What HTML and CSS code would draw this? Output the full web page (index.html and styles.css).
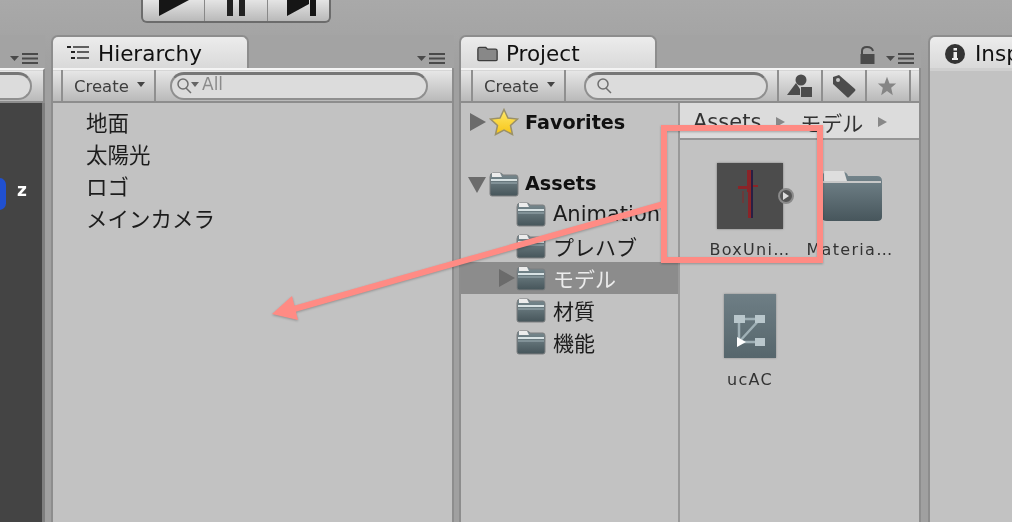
FILE: index.html
```html
<!DOCTYPE html>
<html lang="ja">
<head>
<meta charset="utf-8">
<title>Unity Editor</title>
<link rel="stylesheet" href="styles.css">
</head>
<body>
<svg class="defs" width="0" height="0" aria-hidden="true">
  <defs>
    <linearGradient id="fbody" x1="0" y1="0" x2="0" y2="1"><stop offset="0" stop-color="#7b8c92"/><stop offset="1" stop-color="#46555a"/></linearGradient>
    <linearGradient id="ctrl" x1="0" y1="0" x2="0" y2="1"><stop offset="0" stop-color="#76878e"/><stop offset="1" stop-color="#47565c"/></linearGradient>
    <linearGradient id="star" x1="0" y1="0" x2="0" y2="1"><stop offset="0" stop-color="#ffe96a"/><stop offset="1" stop-color="#f6c416"/></linearGradient>
    <symbol id="folder" viewBox="0 0 30 26">
      <path d="M1 6 Q1 2 4 2 H11 Q13 2 14 4 H27 Q29 4 29 7 V23 Q29 25 27 25 H3 Q1 25 1 23 Z" fill="url(#fbody)" stroke="#7c7f80" stroke-width="1"/>
      <path d="M3 2 H11 L13 6 H3 Z" fill="#ececec"/>
      <path d="M2 9 H28" stroke="#d8e2e4" stroke-width="2"/>
      <path d="M2 12 H28" stroke="#9fb0b5" stroke-width="1"/>
    </symbol>
    <symbol id="menu" viewBox="0 0 29 11">
      <path d="M0 3 H9 L4.500 8 Z" fill="#4a4a4a"/>
      <path d="M12 1 H28 M12 5.500 H28 M12 10 H28" stroke="#4a4a4a" stroke-width="2"/>
    </symbol>
  </defs>
</svg>
<div class="app">
  <header class="topbar">
    <div class="playback">
      <div class="pb-btn"><svg width="32" height="17" viewBox="0 0 32 17"><path d="M1 0 H31 L1 16 Z" fill="#161616"/></svg></div>
      <div class="pb-btn"><svg width="20" height="17" viewBox="0 0 20 17"><path d="M1 0 H7 V16 H1 Z M13 0 H19 V16 H13 Z" fill="#222"/></svg></div>
      <div class="pb-btn"><svg class="step" width="32" height="17" viewBox="0 0 32 17"><path d="M1 0 H23 V4 L1 16 Z M24 0 H30 V16 H24 Z" fill="#161616"/></svg></div>
    </div>
  </header>

  <main class="panels">
    <section class="panel scene">
      <div class="panel-head"><svg class="menu-icon"><use href="#menu"/></svg></div>
      <div class="toolbar scene-toolbar"><div class="search scene-search"></div></div>
      <div class="scene-view"><div class="scene-blob"></div><span class="axis">z</span></div>
    </section>

    <section class="panel hierarchy">
      <div class="panel-head">
        <div class="tab hier-tab">
          <svg class="tab-icon" width="24" height="17" viewBox="0 0 24 17"><path d="M0 1 H4 V3 H0 Z M4 6 H8 V8 H4 Z M4 12 H8 V14 H4 Z" fill="#222"/><path d="M6 2 H22 M10 7 H22 M10 13 H22" stroke="#333" stroke-width="1.600"/></svg>
          <span>Hierarchy</span>
        </div>
        <svg class="menu-icon"><use href="#menu"/></svg>
      </div>
      <div class="toolbar">
        <div class="tb-spacer"></div>
        <div class="create">Create <i class="caret"></i></div>
        <div class="search hier-search">
          <svg width="27" height="20" viewBox="0 0 27 20"><circle cx="8" cy="8" r="5" fill="none" stroke="#6f6f6f" stroke-width="1.500"/><path d="M11 12 L16 17" stroke="#6f6f6f" stroke-width="1.500"/><path d="M16 6 H24 L20 11 Z" fill="#666"/></svg>
          <span>All</span>
        </div>
      </div>
      <ul class="hier-list">
        <li>地面</li>
        <li>太陽光</li>
        <li>ロゴ</li>
        <li>メインカメラ</li>
      </ul>
    </section>

    <section class="panel project">
      <div class="panel-head">
        <div class="tab proj-tab">
          <svg class="tab-icon" width="21" height="16" viewBox="0 0 24 17"><path d="M1 3 Q1 1 3 1 H10 L12 3 H21 Q23 3 23 5 V15 Q23 16 21 16 H3 Q1 16 1 15 Z" fill="#888" stroke="#3c3c3c" stroke-width="1.500"/></svg>
          <span>Project</span>
        </div>
        <svg class="lock" width="15" height="18" viewBox="0 0 15 18"><path d="M2 9 V5 Q2 1 7 1 Q12 1 13 5" fill="none" stroke="#4a4a4a" stroke-width="2"/><rect x="0.500" y="8" width="14" height="10" fill="#4a4a4a"/></svg>
        <svg class="menu-icon proj-menu"><use href="#menu"/></svg>
      </div>
      <div class="toolbar">
        <div class="tb-spacer proj-spacer"></div>
        <div class="create">Create <i class="caret"></i></div>
        <div class="search proj-search">
          <svg width="20" height="20" viewBox="0 0 20 20"><circle cx="8" cy="8" r="5" fill="none" stroke="#6f6f6f" stroke-width="1.500"/><path d="M11 12 L16 17" stroke="#6f6f6f" stroke-width="1.500"/></svg>
        </div>
        <div class="tool-btn first"><svg width="26" height="24" viewBox="0 0 26 24"><path d="M0 21 L9 9 L13 15 V21 Z" fill="#4c4c4c"/><circle cx="14" cy="6" r="5.500" fill="#4c4c4c"/><rect x="14" y="13" width="11" height="10" fill="#4c4c4c"/></svg></div>
        <div class="tool-btn"><svg width="24" height="24" viewBox="0 0 24 24"><path d="M1 3 L7 1 L23 15 Q24 16 23 17 L17 23 Q16 24 15 23 L1 10 Z" fill="#4c4c4c"/><circle cx="6" cy="6" r="2" fill="#c9c9c9"/></svg></div>
        <div class="tool-btn"><svg class="star-btn" width="20" height="20" viewBox="0 0 24 24"><path d="M12 1 L15 9 L23 9 L17 14 L19 23 L12 18 L5 23 L7 14 L1 9 L9 9 Z" fill="#858585"/></svg></div>
      </div>
      <div class="browser">
        <nav class="tree">
          <div class="row top-row"><i class="arrow-r"></i>
            <svg class="star" width="30" height="28" viewBox="0 0 30 28"><path d="M15 1.500 L19 10 L28.500 11 L21.500 17.500 L23.500 26.500 L15 22 L6.500 26.500 L8.500 17.500 L1.500 11 L11 10 Z" fill="url(#star)" stroke="#9a9068" stroke-width="1.500"/></svg>
            <b>Favorites</b></div>
          <div class="row gap-row"></div>
          <div class="row top-row assets-row"><i class="arrow-d"></i>
            <svg class="folder-s"><use href="#folder"/></svg>
            <b>Assets</b></div>
          <div class="row child"><svg class="folder-s"><use href="#folder"/></svg><span>Animation</span></div>
          <div class="row child"><svg class="folder-s"><use href="#folder"/></svg><span>プレハブ</span></div>
          <div class="row child selected"><i class="arrow-r small"></i><svg class="folder-s"><use href="#folder"/></svg><span>モデル</span></div>
          <div class="row child"><svg class="folder-s"><use href="#folder"/></svg><span>材質</span></div>
          <div class="row child"><svg class="folder-s"><use href="#folder"/></svg><span>機能</span></div>
        </nav>
        <div class="assets">
          <div class="crumbs"><span>Assets</span><i class="crumb-arrow"></i><span>モデル</span><i class="crumb-arrow"></i></div>
          <div class="grid">
            <figure class="asset">
              <div class="thumb-box">
                <div class="thumb">
                  <svg width="66" height="66" viewBox="0 0 66 66"><path d="M30 7 H35 V22 H41 V24 H35 V55 H31 V29 H30 V26 H21 V23 H30 Z" fill="#8a2428"/><path d="M34 7 H36 V55 H34 Z" fill="#2a1f44"/><path d="M25 28 H27 V40 H25 Z" fill="#6a3a3a"/></svg>
                </div>
                <div class="play-dot"></div>
              </div>
              <figcaption>BoxUni…</figcaption>
            </figure>
            <figure class="asset">
              <div class="thumb-box">
                <svg class="folder-l" width="62" height="52" viewBox="0 0 62 52"><path d="M1 8 Q1 2 6 2 H22 Q26 2 27 6 H56 Q61 6 61 11 V47 Q61 51 56 51 H6 Q1 51 1 47 Z" fill="url(#ctrl)"/><path d="M3 1 H23 L26 11 H3 Z" fill="#dedede"/><path d="M2 12 H60" stroke="#c8c8c8" stroke-width="2"/></svg>
              </div>
              <figcaption>Materia…</figcaption>
            </figure>
            <figure class="asset">
              <div class="thumb-box">
                <div class="controller">
                  <svg width="52" height="64" viewBox="0 0 52 64"><path d="M18 25 H34 M15 25 L15 46 M15 48 H34 M36 25 L15 48" stroke="#9fb0b6" stroke-width="2.500"/><rect x="10" y="21" width="11" height="8" fill="#b9c7cc"/><rect x="31" y="21" width="10" height="8" fill="#b9c7cc"/><rect x="31" y="44" width="10" height="8" fill="#b9c7cc"/><path d="M13 43 L22 48 L13 53 Z" fill="#fff"/></svg>
                </div>
              </div>
              <figcaption>ucAC</figcaption>
            </figure>
          </div>
        </div>
      </div>
    </section>

    <section class="panel inspector">
      <div class="panel-head">
        <div class="tab insp-tab">
          <svg class="tab-icon" width="20" height="20" viewBox="0 0 20 20"><circle cx="10" cy="10" r="10" fill="#333"/><rect x="8.500" y="8" width="3.500" height="7" fill="#eee"/><rect x="7" y="14" width="6" height="2" fill="#eee"/><rect x="8.500" y="4" width="3.500" height="2.500" fill="#eee"/></svg>
          <span>Inspector</span>
        </div>
      </div>
      <div class="insp-body"></div>
    </section>
  </main>

  <svg class="annotation" width="1012" height="522" viewBox="0 0 1012 522" aria-hidden="true">
    <path d="M664 204 L294 309" stroke="#ff8b84" stroke-width="6" fill="none"/>
    <path d="M272 314 L292 296 L298 320 Z" fill="#ff8b84"/>
    <rect x="664" y="128" width="156" height="132" fill="none" stroke="#ff8b84" stroke-width="6"/>
  </svg>
</div>
</body>
</html>
```

FILE: styles.css
```css
* { box-sizing: border-box; }
html, body { margin: 0; padding: 0; }
body { width: 1012px; height: 522px; overflow: hidden; background: #a3a3a3; font-family: "DejaVu Sans", "Noto Sans CJK JP", sans-serif; color: #111; }
.defs { position: absolute; }
.app { position: relative; width: 1012px; height: 522px; overflow: hidden; background: linear-gradient(#a9a9a9, #a0a0a0 70px); filter: blur(0.45px); }

.topbar { height: 35px; padding-left: 141px; }
.playback { display: flex; width: 190px; height: 23px; border: 2px solid #6c6c6c; border-top: 0; border-radius: 0 0 6px 6px; background: linear-gradient(#e4e4e4, #b9b9b9); overflow: hidden; }
.pb-btn { flex: 1; display: flex; justify-content: center; align-items: flex-start; border-right: 1px solid #888; }
.pb-btn:last-child { border-right: 0; }
.step { margin-left: 8px; }

.panels { display: flex; height: 487px; }
.panel { display: flex; flex-direction: column; }
.panel-head { height: 33px; display: flex; align-items: flex-end; position: relative; flex: none; background: #a3a3a3; }
.menu-icon { width: 29px; height: 11px; margin-left: auto; margin-right: 8px; margin-bottom: 4px; }

.scene { width: 45px; margin-right: 6px; }
.scene .panel-head { justify-content: flex-end; }
.scene .menu-icon { margin-right: 6px; }
.scene-toolbar { border: 0; border-top: 2px solid #8a8a8a; border-right: 2px solid #8a8a8a; justify-content: flex-end; padding-right: 11px; }
.scene-search { width: 70px; flex: none; }
.scene-view { flex: 1; background: #444; border-right: 3px solid #7e7e7e; position: relative; }
.scene-blob { position: absolute; left: -7px; top: 75px; width: 13px; height: 32px; background: #2050d0; border-radius: 7px; }
.axis { position: absolute; left: 17px; top: 77px; font-size: 17px; font-weight: bold; color: #fff; line-height: 20px; }

.hierarchy { width: 403px; margin-right: 5px; border-left: 2px solid #8d8d8d; border-right: 2px solid #8d8d8d; background: #c2c2c2; }
.hierarchy .panel-head { margin: 0 -2px; }
.tab { height: 33px; display: flex; align-items: center; padding-top: 2px; background: linear-gradient(#ececec, #d9d9d9); border: 2px solid #8d8d8d; border-bottom: 0; border-radius: 7px 7px 0 0; font-size: 21.500px; color: #111; }
.hier-tab { width: 198px; padding-left: 14px; gap: 7px; }
.proj-tab { width: 198px; padding-left: 16px; gap: 8px; }
.insp-tab { width: 120px; padding-left: 15px; gap: 10px; flex: none; }
.tab-icon { flex: none; }

.toolbar { height: 35px; flex: none; display: flex; align-items: center; background: linear-gradient(#e8e8e8, #b9b9b9); border-top: 2px solid #f4f4f4; border-bottom: 2px solid #8d8d8d; box-shadow: inset 0 1px 0 #d6d6d6; }
.tb-spacer { width: 10px; height: 100%; border-right: 2px solid #8f8f8f; flex: none; }
.proj-spacer { width: 12px; }
.create { width: 93px; height: 100%; flex: none; display: flex; align-items: center; padding: 1px 0 0 11px; gap: 8px; font-size: 16.500px; color: #3e3e3e; border-right: 2px solid #8f8f8f; }
.caret { width: 0; height: 0; border: 4px solid transparent; border-top: 5px solid #444; margin-top: 1px; }
.search { height: 28px; display: flex; align-items: center; border: 2px solid #8f8f8f; border-top: 3px solid #777; border-radius: 14px; background: #dcdcdc; color: #8b8b8b; font-size: 17px; }
.search span { margin-top: -4px; }
.hier-search { width: 258px; margin-left: 14px; padding-left: 3px; }
.proj-search { width: 184px; margin-left: 18px; padding-left: 9px; }
.tool-btn { width: 44px; height: 100%; flex: none; display: flex; align-items: center; justify-content: center; border-right: 2px solid #8f8f8f; }
.tool-btn.first { margin-left: 9px; border-left: 2px solid #8f8f8f; width: 46px; }
.star-btn { margin-right: 3px; }

.hier-list { list-style: none; margin: 0; padding: 5px 0 0 33px; font-size: 21.500px; color: #1c1c1c; }
.hier-list li { height: 32px; line-height: 32px; white-space: nowrap; }

.project { width: 462px; margin-right: 7px; border-left: 2px solid #8d8d8d; border-right: 2px solid #8d8d8d; background: #c2c2c2; }
.project .panel-head { margin: 0 -2px; }
.lock { margin-left: auto; margin-bottom: 4px; margin-right: 11px; }
.proj-menu { margin-left: 0; margin-right: 6px; }

.browser { flex: 1; display: flex; min-height: 0; }
.tree { width: 219px; flex: none; padding-top: 3px; border-right: 2px solid #999; font-size: 21px; }
.row { height: 32px; display: flex; align-items: center; white-space: nowrap; }
.gap-row { height: 31px; }
.assets-row { height: 29px; }
.top-row b { font-weight: bold; font-size: 19.200px; margin-left: 6px; }
.top-row .star { margin-left: 3px; }
.arrow-r { width: 0; height: 0; border: 9px solid transparent; border-left: 16px solid #6b6b6b; border-right: 0; margin-left: 9px; flex: none; }
.arrow-d { width: 0; height: 0; border: 9px solid transparent; border-top: 16px solid #6b6b6b; border-bottom: 0; margin-left: 7px; flex: none; margin-top: 2px; }
.folder-s { width: 30px; height: 26px; flex: none; }
.assets-row .folder-s { margin-left: 3px; }
.child { padding-left: 55px; color: #1c1c1c; }
.child span { margin-left: 7px; }
.selected { background: #8c8c8c; color: #ececec; padding-left: 38px; }
.arrow-r.small { margin-left: 0; margin-right: 1px; }

.assets { flex: 1; display: flex; flex-direction: column; min-width: 0; }
.crumbs { height: 37px; flex: none; display: flex; align-items: center; gap: 15px; padding: 2px 0 0 13px; background: #dcdcdc; border-bottom: 2px solid #959595; font-size: 21px; color: #333; }
.crumb-arrow { width: 0; height: 0; border: 5px solid transparent; border-left: 9px solid #888; border-right: 0; }
.grid { display: grid; grid-template-columns: 100px 100px; grid-auto-rows: 130px; padding: 18px 0 0 20px; }
.asset { margin: 0; display: flex; flex-direction: column; align-items: center; }
.thumb-box { height: 76px; position: relative; display: flex; align-items: center; justify-content: center; width: 100%; flex: none; }
.thumb { width: 66px; height: 66px; background: #4c4c4c; box-shadow: 0 0 2px #777; flex: none; }
.play-dot { position: absolute; left: 78px; top: 30px; width: 16px; height: 16px; border-radius: 50%; background: #555; border: 2px solid #8a8a8a; }
.play-dot::after { content: ""; position: absolute; left: 3px; top: 2px; border: 4px solid transparent; border-left: 6px solid #ddd; border-right: 0; }
.folder-l { flex: none; margin-left: 4px; }
.controller { width: 52px; height: 64px; background: linear-gradient(#6e7e85, #56666c); box-shadow: 0 0 2px #888; }
figcaption { font-size: 16px; line-height: 18px; color: #333; letter-spacing: 1.300px; margin-top: 7px; white-space: nowrap; }

.inspector { flex: 1; min-width: 0; background: #c2c2c2; border-left: 2px solid #8d8d8d; }
.inspector .panel-head { margin-left: -2px; }
.insp-body { flex: 1; border-top: 3px solid #cfcfcf; }

.annotation { position: absolute; left: 0; top: 0; filter: drop-shadow(0 1px 1px rgba(0,0,0,.25)); }
```
